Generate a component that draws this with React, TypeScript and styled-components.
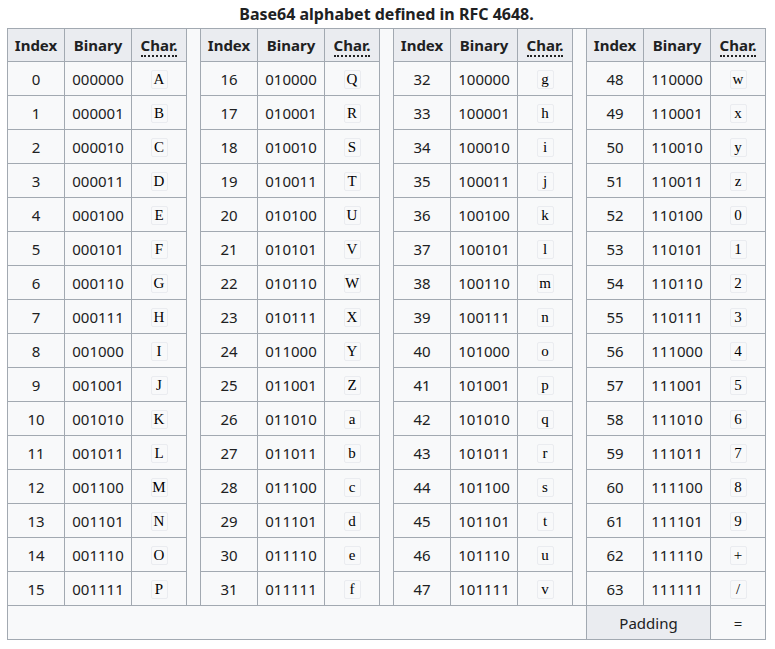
import React from "react";
import styled, { createGlobalStyle } from "styled-components";

const Global = createGlobalStyle`
  html, body { margin: 0; padding: 0; background: #ffffff; }
  body { font-family: "Noto Sans", "Open Sans", sans-serif; color: #202122; }
`;

const Page = styled.div`
  padding: 3px 0 0 7px;
`;

const Table = styled.table`
  border-collapse: collapse;
  table-layout: fixed;
  width: 759px;
  background: #f8f9fa;
  border: 1px solid #a2a9b1;
  font-size: 15px;
  color: #202122;
`;

const Caption = styled.caption`
  font-weight: 700;
  font-size: 16px;
  line-height: 23px;
  padding-bottom: 2px;
  text-align: center;
`;

const Col = styled.col<{ $w: number }>`
  width: ${(p) => p.$w}px;
`;

const Head = styled.th<{ $plain?: boolean }>`
  background: #eaecf0;
  border: 1px solid #a2a9b1;
  height: 32px;
  padding: 0 6px;
  font-weight: ${(p) => (p.$plain ? 400 : 700)};
  text-align: center;
  white-space: nowrap;
`;

const Abbr = styled.abbr`
  text-decoration: none;
  border-bottom: 2px dotted #202122;
  cursor: help;
`;

const Cell = styled.td`
  border: 1px solid #a2a9b1;
  height: 33px;
  padding: 0 6px;
  text-align: center;
  white-space: nowrap;
`;

const Sep = styled.td`
  border: 1px solid #a2a9b1;
  padding: 0;
`;

const Code = styled.code`
  font-family: "Liberation Serif", "Times New Roman", serif;
  font-size: 15px;
  line-height: 17px;
  display: inline-block;
  vertical-align: middle;
  width: 15px;
  text-align: center;
  background: #f8f9fa;
  border: 1px solid #eaecf0;
  border-radius: 2px;
  color: #000;
`;

const alphabet =
  "ABCDEFGHIJKLMNOPQRSTUVWXYZabcdefghijklmnopqrstuvwxyz0123456789+/";

const bin = (n: number) => n.toString(2).padStart(6, "0");

export default function App() {
  const groups = [0, 1, 2, 3];
  return (
    <Page>
      <Global />
      <Table>
        <Caption>Base64 alphabet defined in RFC 4648.</Caption>
        <colgroup>
          {groups.map((g) => (
            <React.Fragment key={g}>
              <Col $w={57} />
              <Col $w={67} />
              <Col $w={55} />
              {g < 3 && <Col $w={14} />}
            </React.Fragment>
          ))}
        </colgroup>
        <tbody>
          <tr>
            {groups.map((g) => (
              <React.Fragment key={g}>
                <Head>Index</Head>
                <Head>Binary</Head>
                <Head>
                  <Abbr title="Character">Char.</Abbr>
                </Head>
                {g < 3 && <Sep rowSpan={17} />}
              </React.Fragment>
            ))}
          </tr>
          {Array.from({ length: 16 }, (_, r) => (
            <tr key={r}>
              {groups.map((g) => {
                const i = g * 16 + r;
                return (
                  <React.Fragment key={g}>
                    <Cell>{i}</Cell>
                    <Cell>{bin(i)}</Cell>
                    <Cell>
                      <Code>{alphabet[i]}</Code>
                    </Cell>
                  </React.Fragment>
                );
              })}
            </tr>
          ))}
          <tr>
            <Cell colSpan={12} />
            <Head $plain colSpan={2}>
              Padding
            </Head>
            <Cell>=</Cell>
          </tr>
        </tbody>
      </Table>
    </Page>
  );
}
